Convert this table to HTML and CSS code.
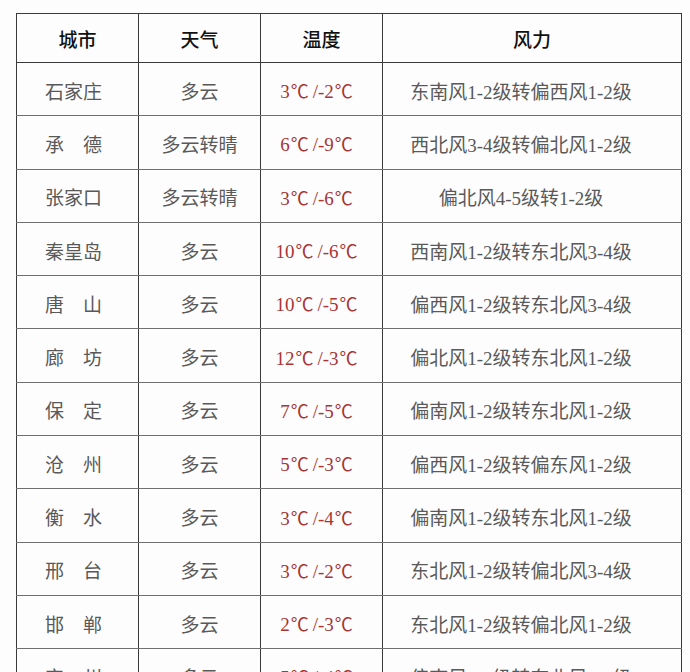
FILE: index.html
```html
<!DOCTYPE html>
<html lang="zh-CN">
<head>
<meta charset="utf-8">
<title>河北天气预报</title>
<link rel="stylesheet" href="styles.css">
</head>
<body>
<table class="wx">
  <thead>
    <tr><th class="c-city">城市</th><th class="c-wx">天气</th><th class="c-temp">温度</th><th class="c-wind">风力</th></tr>
  </thead>
  <tbody>
    <tr><td class="city">石家庄</td><td>多云</td><td class="t">3<span class="deg">℃</span>/-2<span class="deg">℃</span></td><td class="w">东南风1-2级转偏西风1-2级</td></tr>
    <tr><td class="city">承　德</td><td>多云转晴</td><td class="t">6<span class="deg">℃</span>/-9<span class="deg">℃</span></td><td class="w">西北风3-4级转偏北风1-2级</td></tr>
    <tr><td class="city">张家口</td><td>多云转晴</td><td class="t">3<span class="deg">℃</span>/-6<span class="deg">℃</span></td><td class="w">偏北风4-5级转1-2级</td></tr>
    <tr><td class="city">秦皇岛</td><td>多云</td><td class="t">10<span class="deg">℃</span>/-6<span class="deg">℃</span></td><td class="w">西南风1-2级转东北风3-4级</td></tr>
    <tr><td class="city">唐　山</td><td>多云</td><td class="t">10<span class="deg">℃</span>/-5<span class="deg">℃</span></td><td class="w">偏西风1-2级转东北风3-4级</td></tr>
    <tr><td class="city">廊　坊</td><td>多云</td><td class="t">12<span class="deg">℃</span>/-3<span class="deg">℃</span></td><td class="w">偏北风1-2级转东北风1-2级</td></tr>
    <tr><td class="city">保　定</td><td>多云</td><td class="t">7<span class="deg">℃</span>/-5<span class="deg">℃</span></td><td class="w">偏南风1-2级转东北风1-2级</td></tr>
    <tr><td class="city">沧　州</td><td>多云</td><td class="t">5<span class="deg">℃</span>/-3<span class="deg">℃</span></td><td class="w">偏西风1-2级转偏东风1-2级</td></tr>
    <tr><td class="city">衡　水</td><td>多云</td><td class="t">3<span class="deg">℃</span>/-4<span class="deg">℃</span></td><td class="w">偏南风1-2级转东北风1-2级</td></tr>
    <tr><td class="city">邢　台</td><td>多云</td><td class="t">3<span class="deg">℃</span>/-2<span class="deg">℃</span></td><td class="w">东北风1-2级转偏北风3-4级</td></tr>
    <tr><td class="city">邯　郸</td><td>多云</td><td class="t">2<span class="deg">℃</span>/-3<span class="deg">℃</span></td><td class="w">东北风1-2级转偏北风1-2级</td></tr>
    <tr><td class="city">定　州</td><td>多云</td><td class="t">5<span class="deg">℃</span>/-4<span class="deg">℃</span></td><td class="w">偏南风1-2级转东北风1-2级</td></tr>
  </tbody>
</table>
</body>
</html>
```
FILE: styles.css
```css
html, body {
  margin: 0;
  padding: 0;
  background: #fdfdfd;
}
body {
  padding: 13px 0 0 16px;
  font-family: "Liberation Serif", "Noto Sans CJK SC", serif;
}
.wx {
  border-collapse: collapse;
  width: 661px;
  table-layout: fixed;
}
.wx th, .wx td {
  border: 1px solid #3a3a3a;
  text-align: center;
  vertical-align: middle;
  padding: 0;
  white-space: nowrap;
}
.wx th {
  height: 48px;
  font-size: 19px;
  font-weight: 500;
  color: #111;
}
.wx td {
  height: 50.3px;
  font-size: 19px;
  color: #595959;
  padding-top: 2px;
}
.wx tbody td {
  border-top-color: #707070;
  border-bottom-color: #707070;
}
.c-city, .c-wx, .c-temp { width: 121px; }
.c-wind { width: 298px; }
.wx td.city {
  padding-right: 8px;
}
.wx td.w {
  padding-right: 22px;
}
.wx td.t {
  color: #a83434;
  padding-right: 6px;
}
.deg {
  font-family: "Noto Sans CJK SC", sans-serif;
  font-size: 18px;
  margin: 0 4px 0 1px;
}
```
